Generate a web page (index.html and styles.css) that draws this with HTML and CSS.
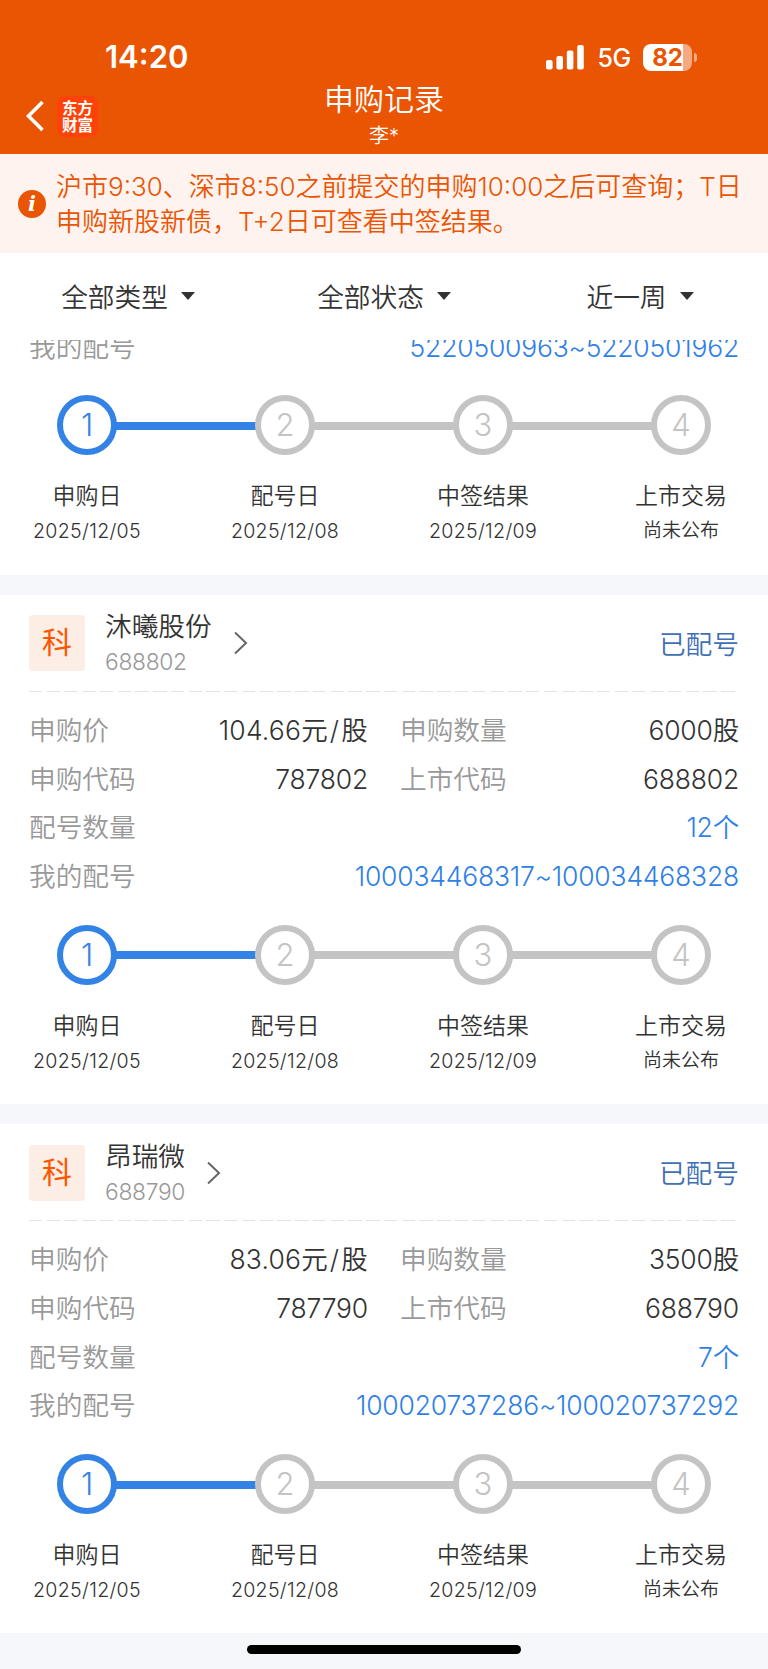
FILE: index.html
```html
<!DOCTYPE html>
<html lang="zh-CN">
<head>
  <meta charset="UTF-8">
  <title>申购记录</title>
  <link rel="stylesheet" href="styles.css">
</head>
<body>
  <header class="header">
    <div class="status-bar">
      <span class="time">14:20</span>
      <div class="status-icons">
        <svg class="signal" width="38" height="25" viewBox="0 0 38 25" fill="#fff">
          <rect x="0" y="15" width="6.6" height="9.5" rx="2"/>
          <rect x="10.4" y="11" width="6.6" height="13.5" rx="2"/>
          <rect x="20.8" y="5.5" width="6.6" height="19" rx="2"/>
          <rect x="31.2" y="0" width="6.6" height="24.5" rx="2"/>
        </svg>
        <span class="network">5G</span>
        <div class="battery"><span>82</span></div>
        <i class="battery-cap"></i>
      </div>
    </div>
    <div class="nav">
      <div class="nav-left">
        <svg class="back" width="18" height="32" viewBox="0 0 18 32" fill="none" stroke="#fff" stroke-width="3.6">
          <path d="M16.5 2 L2.5 16 L16.5 30"/>
        </svg>
        <div class="logo">东方<br>财富</div>
      </div>
      <div class="nav-title">
        <h1>申购记录</h1>
        <p>李*</p>
      </div>
    </div>
  </header>

  <div class="notice">
    <span class="info">i</span>
    <p>沪市9:30、深市8:50之前提交的申购10:00之后可查询；T日<br>申购新股新债，T+2日可查看中签结果。</p>
  </div>

  <div class="filters">
    <div class="filter">全部类型<i class="caret"></i></div>
    <div class="filter">全部状态<i class="caret"></i></div>
    <div class="filter">近一周<i class="caret"></i></div>
  </div>

  <main class="list">
    <section class="card card-scrolled">
      <div class="rows">
        <div class="row"><span class="label">我的配号</span><span class="value link">5220500963~5220501962</span></div>
      </div>
      <div class="track">
        <b class="dot active">1</b><i class="line active"></i><b class="dot">2</b><i class="line"></i><b class="dot">3</b><i class="line"></i><b class="dot">4</b>
      </div>
      <div class="steps">
        <div class="step"><p>申购日</p><span>2025/12/05</span></div>
        <div class="step"><p>配号日</p><span>2025/12/08</span></div>
        <div class="step"><p>中签结果</p><span>2025/12/09</span></div>
        <div class="step"><p>上市交易</p><span class="cn">尚未公布</span></div>
      </div>
    </section>

    <section class="card">
      <div class="card-head">
        <span class="tag">科</span>
        <div class="stock">
          <h2>沐曦股份</h2>
          <p>688802</p>
        </div>
        <svg class="arrow" width="14" height="24" viewBox="0 0 14 24" fill="none" stroke="#666" stroke-width="2">
          <path d="M1 1.5 L12 12 L1 22.5"/>
        </svg>
        <span class="state">已配号</span>
      </div>
      <div class="rows">
        <div class="row">
          <div class="cell"><span class="label">申购价</span><span class="value price">104.66元<i>/</i>股</span></div>
          <div class="cell"><span class="label">申购数量</span><span class="value">6000股</span></div>
        </div>
        <div class="row">
          <div class="cell"><span class="label">申购代码</span><span class="value">787802</span></div>
          <div class="cell"><span class="label">上市代码</span><span class="value">688802</span></div>
        </div>
        <div class="row"><span class="label">配号数量</span><span class="value link">12个</span></div>
        <div class="row"><span class="label">我的配号</span><span class="value link">100034468317~100034468328</span></div>
      </div>
      <div class="track">
        <b class="dot active">1</b><i class="line active"></i><b class="dot">2</b><i class="line"></i><b class="dot">3</b><i class="line"></i><b class="dot">4</b>
      </div>
      <div class="steps">
        <div class="step"><p>申购日</p><span>2025/12/05</span></div>
        <div class="step"><p>配号日</p><span>2025/12/08</span></div>
        <div class="step"><p>中签结果</p><span>2025/12/09</span></div>
        <div class="step"><p>上市交易</p><span class="cn">尚未公布</span></div>
      </div>
    </section>

    <section class="card">
      <div class="card-head">
        <span class="tag">科</span>
        <div class="stock">
          <h2>昂瑞微</h2>
          <p>688790</p>
        </div>
        <svg class="arrow" width="14" height="24" viewBox="0 0 14 24" fill="none" stroke="#666" stroke-width="2">
          <path d="M1 1.5 L12 12 L1 22.5"/>
        </svg>
        <span class="state">已配号</span>
      </div>
      <div class="rows">
        <div class="row">
          <div class="cell"><span class="label">申购价</span><span class="value price">83.06元<i>/</i>股</span></div>
          <div class="cell"><span class="label">申购数量</span><span class="value">3500股</span></div>
        </div>
        <div class="row">
          <div class="cell"><span class="label">申购代码</span><span class="value">787790</span></div>
          <div class="cell"><span class="label">上市代码</span><span class="value">688790</span></div>
        </div>
        <div class="row"><span class="label">配号数量</span><span class="value link">7个</span></div>
        <div class="row"><span class="label">我的配号</span><span class="value link">100020737286~100020737292</span></div>
      </div>
      <div class="track">
        <b class="dot active">1</b><i class="line active"></i><b class="dot">2</b><i class="line"></i><b class="dot">3</b><i class="line"></i><b class="dot">4</b>
      </div>
      <div class="steps">
        <div class="step"><p>申购日</p><span>2025/12/05</span></div>
        <div class="step"><p>配号日</p><span>2025/12/08</span></div>
        <div class="step"><p>中签结果</p><span>2025/12/09</span></div>
        <div class="step"><p>上市交易</p><span class="cn">尚未公布</span></div>
      </div>
    </section>
  </main>

  <div class="home-bar"></div>
</body>
</html>
```
FILE: styles.css
```css
* {
  box-sizing: border-box;
}

body {
  margin: 0;
  height: 1669px;
  overflow: hidden;
  background: #f6f7fa;
  color: #333;
  font-family: Inter, "Noto Sans CJK SC", sans-serif;
  font-weight: 350;
  white-space: nowrap;
}

h1, h2, p {
  margin: 0;
  font-weight: inherit;
}

/* header */
.header {
  height: 154px;
  padding-top: 36px;
  background: #ea5504;
  color: #fff;
}

.status-bar {
  display: flex;
  justify-content: space-between;
  align-items: center;
  height: 42px;
  padding: 0 71px 0 105px;
}

.time {
  font-size: 31px;
  font-weight: 600;
  line-height: 42px;
}

.status-icons {
  display: flex;
  align-items: center;
}

.network {
  margin: 2px 12px 0 13px;
  font-size: 25px;
  font-weight: 500;
  letter-spacing: -0.3px;
}

.battery {
  width: 49px;
  height: 27px;
  border-radius: 8px;
  background: linear-gradient(to right, #fff 82%, #f5aa82 82%);
  color: #ea5504;
  font-size: 24px;
  font-weight: 700;
  line-height: 27px;
  text-align: center;
}

.battery-cap {
  width: 3px;
  height: 9px;
  margin-left: 2px;
  border-radius: 0 4px 4px 0;
  background: #f5aa82;
}

.nav {
  display: grid;
  grid-template-columns: 1fr auto 1fr;
  height: 76px;
}

.nav-left {
  display: flex;
  align-items: center;
  padding-left: 26px;
}

.logo {
  width: 41px;
  height: 41px;
  margin-left: 13px;
  padding-top: 4px;
  border-radius: 8px;
  background: #ff4208;
  font-size: 15.5px;
  font-weight: 700;
  line-height: 17px;
  text-align: center;
}

.nav-title {
  text-align: center;
}

.nav-title h1 {
  font-size: 30px;
  line-height: 43px;
}

.nav-title p {
  font-size: 20px;
  line-height: 31px;
}

/* notice */
.notice {
  display: flex;
  align-items: center;
  height: 99px;
  padding-left: 18px;
  background: #fef3ee;
  color: #ea5504;
}

.info {
  width: 28px;
  height: 28px;
  margin-right: 10px;
  border-radius: 50%;
  background: #ea5504;
  color: #fff;
  font: italic 700 21px/28px "DejaVu Serif", serif;
  text-align: center;
}

.notice p {
  font-size: 26px;
  line-height: 35px;
}

/* filters */
.filters {
  display: grid;
  grid-template-columns: repeat(3, 1fr);
  height: 87px;
  background: #fff;
}

.filter {
  display: flex;
  justify-content: center;
  align-items: center;
  padding-bottom: 2px;
  font-size: 26.7px;
}

.caret {
  margin-left: 13px;
  border: 7px solid transparent;
  border-top: 8px solid #333;
  border-bottom: 0;
}

/* list */
.list {
  height: 1294px;
  overflow: hidden;
}

.card {
  height: 509.3px;
  margin-bottom: 20px;
  background: #fff;
}

/* first card is partly scrolled under the filters */
.card-scrolled {
  height: 252.2px;
  margin-top: -17.4px;
}

.card-scrolled .rows {
  padding-top: 0;
}

.card-head {
  display: flex;
  align-items: center;
  height: 97px;
  margin: 0 31px 0 29px;
  background: repeating-linear-gradient(to right, #e2e2e2 0 13.3px, transparent 13.3px 17.75px) bottom / 100% 1px no-repeat;
}

.tag {
  width: 56px;
  height: 56px;
  border-radius: 4px;
  background: #fdeee5;
  color: #fe5500;
  font-size: 30px;
  font-weight: 400;
  line-height: 54px;
  text-align: center;
}

.stock {
  margin: 0 22px 0 20px;
}

.stock h2 {
  font-size: 26.7px;
  line-height: 37px;
}

.stock p {
  color: #999;
  font-size: 22.8px;
  line-height: 33px;
  letter-spacing: -0.3px;
}

.state {
  margin: 0 -2px 2px auto;
  color: #3f6fb4;
  font-size: 26.7px;
}

.rows {
  padding: 14px 29px 0 29px;
}

.row {
  display: flex;
  justify-content: space-between;
  height: 48.8px;
  font-size: 26.7px;
  line-height: 48.8px;
}

.cell {
  display: flex;
  justify-content: space-between;
  width: 339px;
}

.label {
  color: #999;
}

.value {
  font-size: 26.5px;
  letter-spacing: -0.2px;
}

.price {
  letter-spacing: 0.2px;
}

.price i {
  padding: 0 2px;
  font-style: normal;
}

.link {
  color: #2f7fe6;
}

/* progress */
.track {
  display: flex;
  align-items: center;
  margin-top: 24px;
  padding: 0 57px;
}

.dot {
  width: 60px;
  height: 60px;
  border: 6px solid #c4c4c4;
  border-radius: 50%;
  color: #c4c4c4;
  font-size: 31px;
  font-weight: 300;
  line-height: 48px;
  text-align: center;
}

.line {
  flex: 1;
  height: 8px;
  margin: 1px -1px 0;
  background: #c4c4c4;
}

.dot.active {
  border-color: #3382e5;
  color: #3382e5;
}

.line.active {
  background: #3382e5;
}

.steps {
  display: flex;
  justify-content: space-between;
  margin-top: 23px;
  padding: 0 29px;
}

.step {
  width: 116px;
  text-align: center;
}

.step p {
  font-size: 23px;
  line-height: 36px;
}

.step span {
  display: block;
  font-size: 19.6px;
  line-height: 34px;
  letter-spacing: 0.3px;
}

.step .cn {
  font-size: 19px;
  letter-spacing: 0;
}

.home-bar {
  width: 274px;
  height: 9px;
  margin: 11px auto 0;
  border-radius: 5px;
  background: #000;
}
```
